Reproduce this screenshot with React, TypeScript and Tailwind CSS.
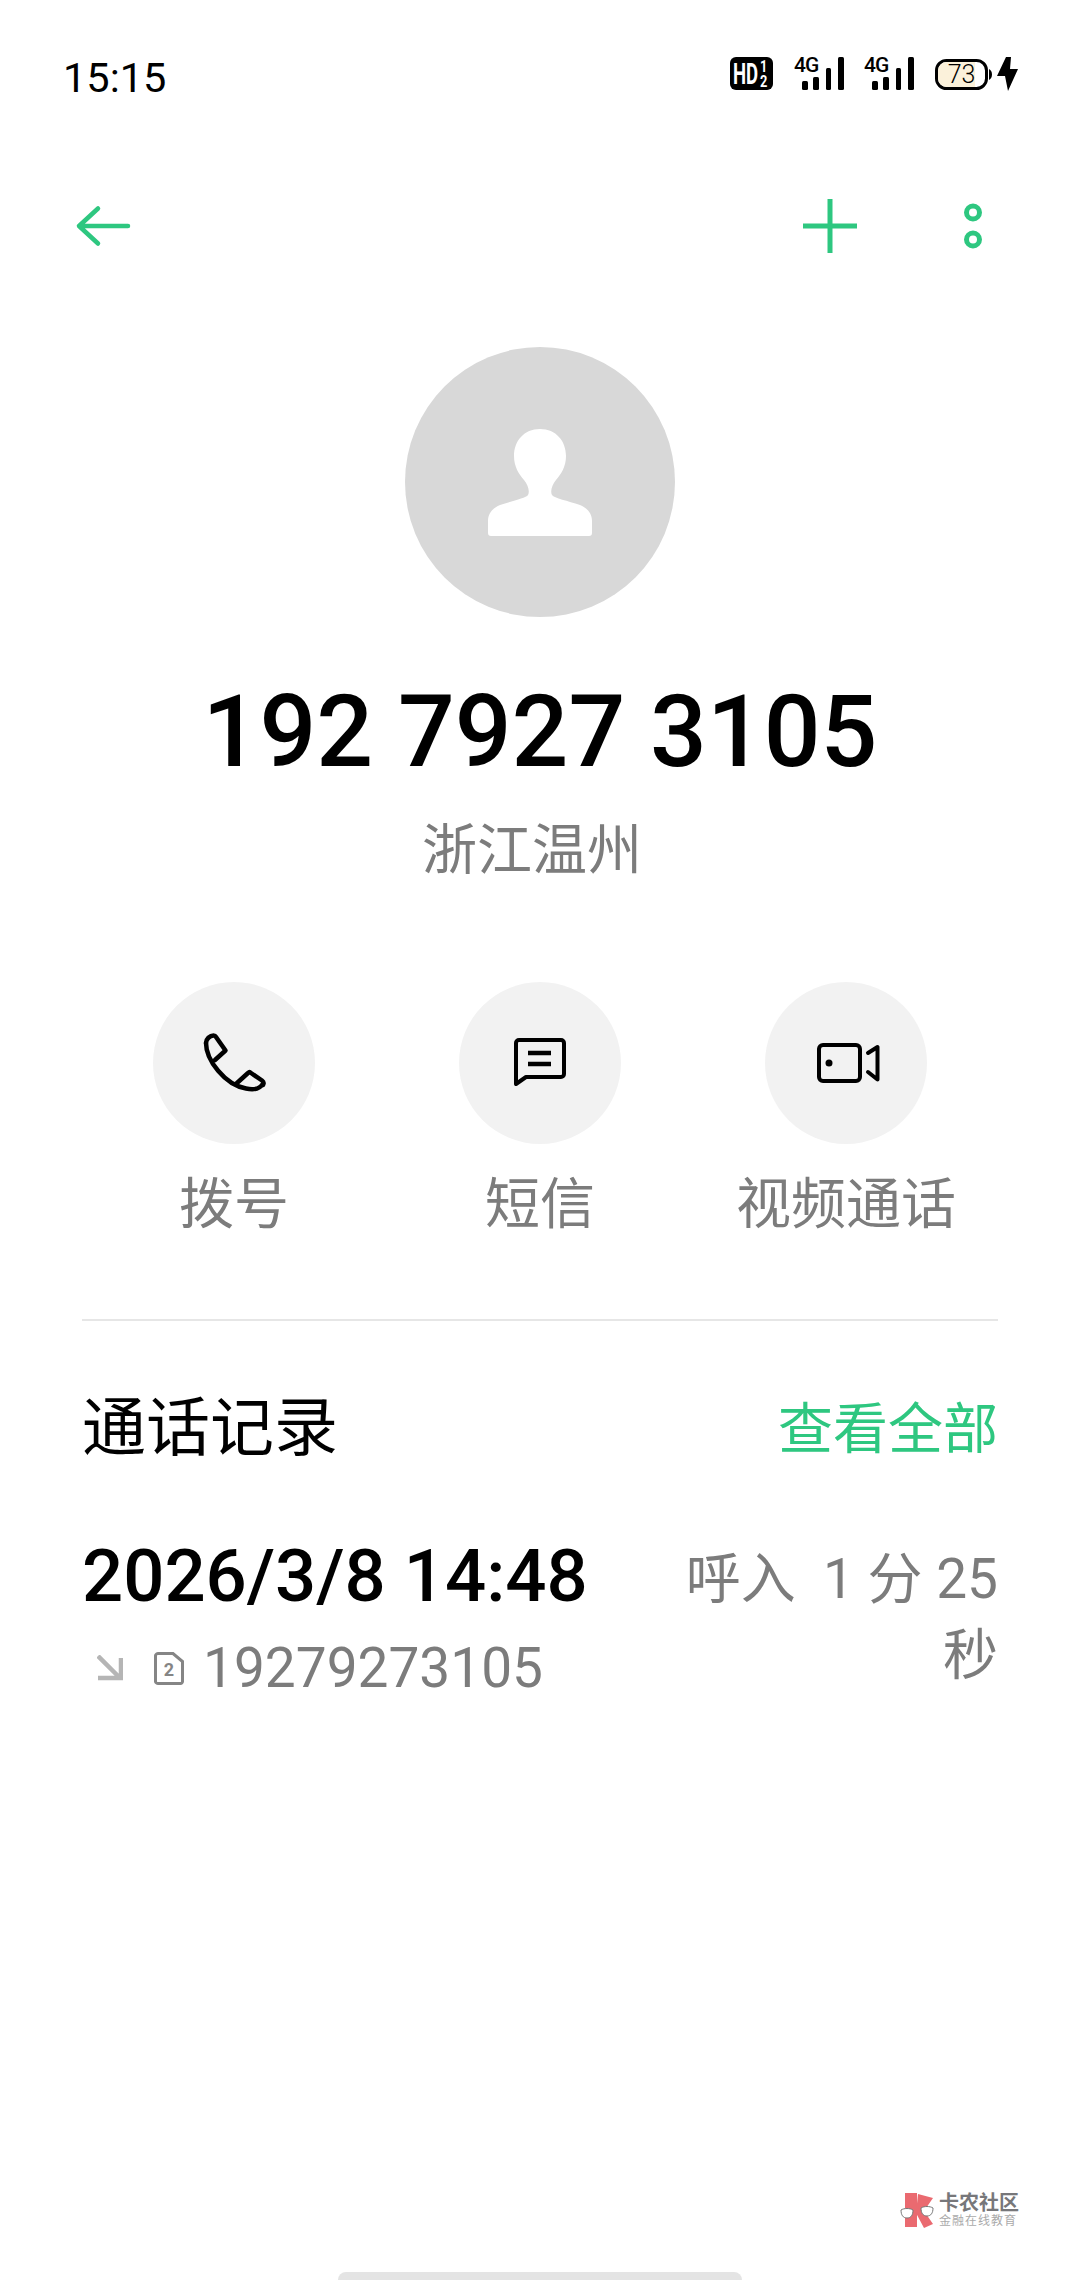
import React from 'react';

const GREEN = '#2ec780';

const BackIcon = () => (
    <svg width="56" height="44" viewBox="0 0 56 44" fill="none" stroke={GREEN} strokeWidth="4.500" strokeLinecap="round" strokeLinejoin="round">
        <path d="M4 22h49M23 4.500 4 22l19 17.500" />
    </svg>
);

const PlusIcon = () => (
    <svg width="54" height="54" viewBox="0 0 54 54" fill="none" stroke={GREEN} strokeWidth="5">
        <path d="M0 27h54M27 0v54" />
    </svg>
);

const MoreIcon = () => (
    <svg width="20" height="46" viewBox="0 0 20 46" fill="none" stroke={GREEN} strokeWidth="5">
        <circle cx="10" cy="9.500" r="6.500" />
        <circle cx="10" cy="36.500" r="6.500" />
    </svg>
);

const HdIcon = () => (
    <svg width="43" height="33" viewBox="0 0 43 33">
        <rect width="43" height="33" rx="6" fill="#000" />
        <text transform="translate(3 27) scale(0.64 1)" fontSize="29" fontWeight="700" fill="#fff" fontFamily="Roboto, sans-serif">HD</text>
        <text transform="translate(30 15) scale(0.8 1)" fontSize="16" fontWeight="700" fill="#fff" fontFamily="Roboto, sans-serif">1</text>
        <text transform="translate(30 30) scale(0.8 1)" fontSize="16" fontWeight="700" fill="#fff" fontFamily="Roboto, sans-serif">2</text>
    </svg>
);

const SignalIcon = () => (
    <svg className="-mt-[6px]" width="50" height="39" viewBox="0 -6 50 39">
        <text x="0" y="15" fontSize="21" fontWeight="500" fill="#000" fontFamily="Roboto, sans-serif" letterSpacing="-1">4G</text>
        <rect x="8" y="24" width="6" height="9" rx="1.500" />
        <rect x="19" y="20" width="6" height="13" rx="1.500" />
        <rect x="32" y="11" width="5" height="22" rx="1.500" />
        <rect x="44" y="0" width="6" height="33" rx="1.500" />
    </svg>
);

const BatteryIcon = () => (
    <svg width="57" height="33" viewBox="0 0 57 33">
        <rect x="1.500" y="2.500" width="50" height="28" rx="10" fill="#fff" stroke="#000" strokeWidth="3" />
        <path d="M3 12a9 9 0 0 1 9-8h28v25H12a9 9 0 0 1-9-8z" fill="#fbf1da" />
        <path d="M54 11c2 1 3 3 3 5.500s-1 4.500-3 5.500z" />
        <text x="26.500" y="25" fontSize="25" textAnchor="middle" fill="#000" fontFamily="Roboto, sans-serif" fontWeight="300">73</text>
    </svg>
);

const BoltIcon = () => (
    <svg width="21" height="34" viewBox="0 0 21 34">
        <path d="M9 0 0 19h8l3 15 10-22h-8l1-12z" />
    </svg>
);

const PersonIcon = () => (
    <svg width="104" height="107" viewBox="0 0 104 107" fill="#fff">
        <path d="M52 0C68 0 78 12 78 27C78 38 73 45 68 51C64 56 62 62 64 66C66 69 80 72 92 76C99 79 104 84 104 92V104Q104 107 101 107H3Q0 107 0 104V92C0 84 5 79 12 76C24 72 38 69 40 66C42 62 40 56 36 51C31 45 26 38 26 27C26 12 36 0 52 0Z" />
    </svg>
);

const PhoneIcon = () => (
    <svg width="64" height="60" viewBox="-1 0 64 60" fill="none" stroke="#000" strokeWidth="4.500" strokeLinejoin="round" strokeLinecap="round">
        <path d="M3 10C3 27 22 52 43 55.500C50 57 57 56 60 50.500" />
        <path d="M3 10C3 6 7 2.500 10.500 2.500C11.500 2.500 12.500 3 13 4L22.500 17.500L12 27" />
        <path d="M34 50L45 40C46 39 47 39 48 40L59 47.500C61 49 61 50 60 52" />
    </svg>
);

const MessageIcon = () => (
    <svg width="52" height="50" viewBox="0 0 52 50" fill="none" stroke="#000" strokeWidth="4">
        <path d="M2 46V5a3 3 0 0 1 3-3h42a3 3 0 0 1 3 3v31a3 3 0 0 1-3 3H12z" strokeLinejoin="round" />
        <path d="M14 15h23M14 26h23" strokeWidth="4.500" />
    </svg>
);

const VideoIcon = () => (
    <svg width="68" height="40" viewBox="-5 0 68 40" fill="none" stroke="#000" strokeWidth="4" strokeLinejoin="round" strokeLinecap="round">
        <rect x="2" y="2" width="41" height="36" rx="4" />
        <circle cx="12" cy="20" r="3.500" fill="#000" stroke="none" />
        <path d="M51 10 60.500 4v32.500L51 29" />
    </svg>
);

const IncomingIcon = () => (
    <svg width="26" height="26" viewBox="0 0 26 26" fill="none" stroke="#b5b5b5" strokeWidth="4.500">
        <path d="M1 1l21 21M1 23h23V3" />
    </svg>
);

const SimIcon = () => (
    <svg width="30" height="33" viewBox="0 0 30 33" fill="none">
        <path d="M4 1.500h15l9.500 8v20c0 1-1 2-2 2H4c-1 0-2.500-1-2.500-2v-26c0-1 1.500-2 2.500-2z" stroke="#858585" strokeWidth="3" />
        <text x="15" y="24" fontSize="18" fontWeight="700" textAnchor="middle" fill="#858585" fontFamily="Roboto, sans-serif">2</text>
    </svg>
);

const KanongLogo = () => (
    <svg width="34" height="35" viewBox="0 0 34 35">
        <path d="M5 0h12v34H5zM18 1l15 4-9 13 9 13-9 4-8-15z" fill="#ea6a70" />
        <path d="M1 17c3-2 9-2 12 0 0 5-2 8-6 8s-6-3-6-8zM21 15c3-2 9-2 12 0 0 5-2 8-6 8s-6-3-6-8z" fill="#fff" stroke="#777" strokeWidth="1" />
    </svg>
);

const actions = [
    { label: '拨号', icon: <PhoneIcon /> },
    { label: '短信', icon: <MessageIcon /> },
    { label: '视频通话', icon: <VideoIcon /> },
];

const App: React.FC = () => {
    return (
        <div className="relative h-[2280px] w-[1080px] overflow-hidden bg-white font-['Roboto','Noto_Sans_CJK_SC',sans-serif]">
            <div className="flex h-[186px] items-start justify-between pl-[63px] pr-[62px] pt-[57px]">
                <span className="mt-[3px] text-[41.500px] leading-[36px] text-black">15:15</span>
                <div className="flex items-start">
                    <HdIcon />
                    <div className="ml-[21px]"><SignalIcon /></div>
                    <div className="ml-[20px]"><SignalIcon /></div>
                    <div className="ml-[21px] mt-px"><BatteryIcon /></div>
                    <div className="ml-[5px]"><BoltIcon /></div>
                </div>
            </div>

            <div className="flex h-[80px] items-center justify-between pl-[75px] pr-[97px]">
                <BackIcon />
                <div className="flex items-center gap-[106px]">
                    <PlusIcon />
                    <MoreIcon />
                </div>
            </div>

            <div className="mt-[81px] flex flex-col items-center">
                <div className="flex h-[270px] w-[270px] items-center justify-center rounded-full bg-[#d8d8d8]">
                    <PersonIcon />
                </div>
                <div className="mt-[57px] text-[100px] font-medium leading-[116px] text-black">192 7927 3105</div>
                <div className="mr-[16px] mt-[30px] text-[55px] leading-[60px] text-[#7c7c7c]">浙江温州</div>
            </div>

            <div className="mt-[102px] grid grid-cols-3 px-[81px]">
                {actions.map((action) => (
                    <div key={action.label} className="flex flex-col items-center">
                        <div className="flex h-[162px] w-[162px] items-center justify-center rounded-full bg-[#f2f2f2]">
                            {action.icon}
                        </div>
                        <div className="mt-[30px] text-[55px] leading-[60px] text-[#7c7c7c]">{action.label}</div>
                    </div>
                ))}
            </div>

            <div className="mx-[82px] mt-[85px] h-[2px] bg-[#e6e6e6]" />

            <div className="mx-[82px] mt-[72px] flex items-center justify-between">
                <span className="text-[64px] leading-[72px] text-black">通话记录</span>
                <span className="text-[55px] leading-[72px] text-[#2ec780]">查看全部</span>
            </div>

            <div className="mx-[82px] mt-[70px] flex items-start justify-between">
                <div>
                    <div className="text-[72.500px] font-medium leading-[84px] text-black">2026/3/8 14:48</div>
                    <div className="mt-[17px] flex items-center">
                        <div className="ml-[15px]"><IncomingIcon /></div>
                        <div className="ml-[31px]"><SimIcon /></div>
                        <span className="ml-[19px] text-[55px] leading-[64px] text-[#7c7c7c]">19279273105</span>
                    </div>
                </div>
                <div className="mt-[6px] w-[320px] text-right text-[55px] leading-[76px] text-[#7c7c7c]">呼入&nbsp;&nbsp;1 分 25 秒</div>
            </div>

            <div className="absolute left-[900px] top-[2192px] flex items-center gap-[5px]">
                <KanongLogo />
                <div className="flex flex-col">
                    <span className="text-[20px] font-bold leading-[22px] text-[#77777a]">卡农社区</span>
                    <span className="text-[12px] leading-[14px] tracking-[1px] text-[#aaaaaa]">金融在线教育</span>
                </div>
            </div>
            <div className="absolute bottom-0 left-[338px] h-[8px] w-[404px] rounded-t-full bg-[#e4e4e4]" />
        </div>
    );
};

export default App;
